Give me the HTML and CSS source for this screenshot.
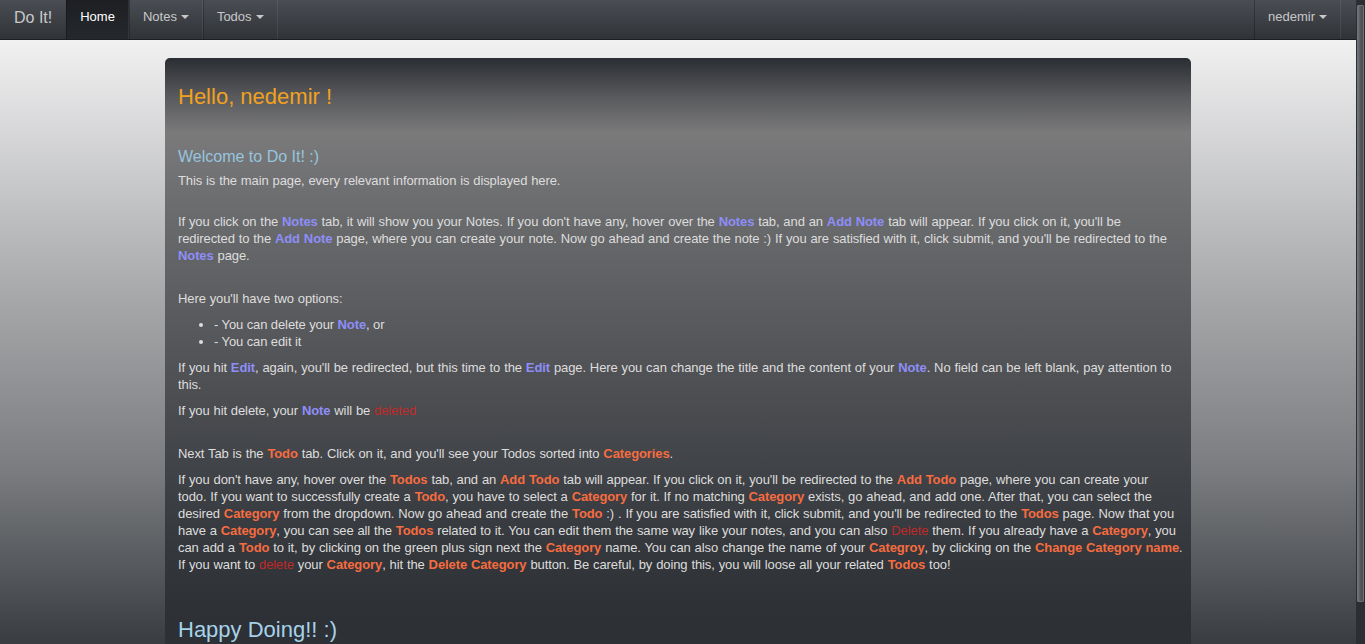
FILE: index.html
```html
<!DOCTYPE html>
<html lang="en">
<head>
<meta charset="utf-8">
<title>Do It!</title>
<link rel="stylesheet" href="styles.css">
</head>
<body>
<div class="app">
  <div class="page">
    <nav class="navbar">
      <a class="brand" href="#">Do It!</a>
      <ul class="nav">
        <li class="active"><a href="#">Home</a></li>
        <li><a href="#">Notes <span class="caret"></span></a></li>
        <li><a href="#">Todos <span class="caret"></span></a></li>
      </ul>
      <ul class="nav nav-right">
        <li><a href="#">nedemir <span class="caret"></span></a></li>
      </ul>
    </nav>
    <main class="panel">
      <h2 class="hello">Hello, nedemir !</h2>
      <h4 class="welcome">Welcome to Do It! :)</h4>
      <p>This is the main page, every relevant information is displayed here.</p>
      <p class="gap-md">If you click on the <b class="n">Notes</b> tab, it will show you your Notes. If you don't have any, hover over the <b class="n">Notes</b> tab, and an <b class="n">Add Note</b> tab will appear. If you click on it, you'll be<br>redirected to the <b class="n">Add Note</b> page, where you can create your note. Now go ahead and create the note :) If you are satisfied with it, click submit, and you'll be redirected to the<br><b class="n">Notes</b> page.</p>
      <p class="gap-lg">Here you'll have two options:</p>
      <ul class="options">
        <li>- You can delete your <b class="n">Note</b>, or</li>
        <li>- You can edit it</li>
      </ul>
      <p>If you hit <b class="n">Edit</b>, again, you'll be redirected, but this time to the <b class="n">Edit</b> page. Here you can change the title and the content of your <b class="n">Note</b>. No field can be left blank, pay attention to<br>this.</p>
      <p>If you hit delete, your <b class="n">Note</b> will be <span class="del">deleted</span></p>
      <p class="gap-lg">Next Tab is the <b class="t">Todo</b> tab. Click on it, and you'll see your Todos sorted into <b class="t">Categories</b>.</p>
      <p>If you don't have any, hover over the <b class="t">Todos</b> tab, and an <b class="t">Add Todo</b> tab will appear. If you click on it, you'll be redirected to the <b class="t">Add Todo</b> page, where you can create your<br>todo. If you want to successfully create a <b class="t">Todo</b>, you have to select a <b class="t">Category</b> for it. If no matching <b class="t">Category</b> exists, go ahead, and add one. After that, you can select the<br>desired <b class="t">Category</b> from the dropdown. Now go ahead and create the <b class="t">Todo</b> :) . If you are satisfied with it, click submit, and you'll be redirected to the <b class="t">Todos</b> page. Now that you<br>have a <b class="t">Category</b>, you can see all the <b class="t">Todos</b> related to it. You can edit them the same way like your notes, and you can also <span class="del">Delete</span> them. If you already have a <b class="t">Category</b>, you<br>can add a <b class="t">Todo</b> to it, by clicking on the green plus sign next the <b class="t">Category</b> name. You can also change the name of your <b class="t">Categroy</b>, by clicking on the <b class="t">Change Category name</b>.<br>If you want to <span class="del">delete</span> your <b class="t">Category</b>, hit the <b class="t">Delete Category</b> button. Be careful, by doing this, you will loose all your related <b class="t">Todos</b> too!</p>
      <h2 class="closing">Happy Doing!! :)</h2>
    </main>
  </div>
  <div class="scrollbar"><div class="thumb"></div></div>
</div>
</body>
</html>
```

FILE: styles.css
```css
html, body {
  margin: 0;
  height: 100%;
  overflow: hidden;
}
body {
  font-family: "Liberation Sans", Arial, sans-serif;
  font-size: 13px;
  line-height: 17px;
  color: #dddddd;
}
.app {
  display: flex;
  height: 100vh;
}
.page {
  flex: 1;
  min-width: 0;
  overflow: hidden;
  background: linear-gradient(to bottom, #f1f1f2 40px, #a6a7a9 300px, #7a7c7f 470px, #393c41 644px);
}
.scrollbar {
  width: 9px;
  background: #2b2e32;
  padding-top: 5px;
  box-sizing: border-box;
}
.thumb {
  height: 597px;
  margin-left: 1px;
  width: 7px;
  box-sizing: border-box;
  border: 1px solid #6f7276;
  border-radius: 1px;
  background: linear-gradient(to right, #74777b, #56595d 40%, #4a4d51);
}

/* navbar */
.navbar {
  display: flex;
  align-items: stretch;
  height: 40px;
  box-sizing: border-box;
  padding-right: 15px;
  background: linear-gradient(to bottom, #4a4e54, #3a3e43 60%, #303338);
  border-bottom: 1px solid #1c1e22;
}
.brand {
  display: flex;
  align-items: center;
  padding: 0 14px 5px 14px;
  white-space: nowrap;
  font-size: 16px;
  color: #c8c8c8;
  text-decoration: none;
}
.nav {
  display: flex;
  margin: 0;
  padding: 0;
  list-style: none;
}
.nav-right {
  margin-left: auto;
}
.nav li {
  display: flex;
}
.nav a {
  display: flex;
  align-items: center;
  gap: 4px;
  padding: 0 13px 6px;
  white-space: nowrap;
  font-size: 13px;
  color: #c8c8c8;
  text-decoration: none;
  border-left: 1px solid rgba(0, 0, 0, 0.25);
  border-right: 1px solid rgba(255, 255, 255, 0.07);
}
.nav .active a {
  color: #ffffff;
  background: linear-gradient(to bottom, #1d1f23, #25282c);
}
.caret {
  display: inline-block;
  width: 0;
  height: 0;
  border-top: 4px solid #c8c8c8;
  border-left: 4px solid transparent;
  border-right: 4px solid transparent;
  margin-top: 1px;
}

/* panel */
.panel {
  display: block;
  width: 1026px;
  box-sizing: border-box;
  margin: 18px auto 0;
  padding: 26px 13px 60px;
  border-radius: 5px 5px 0 0;
  background: linear-gradient(to bottom, #2a2d32 0px, #5a5b5e 40px, #7a7a7b 75px, #6b6c6e 150px, #5b5c5f 250px, #4a4c50 350px, #3d4044 430px, #33363a 500px, #2d3035 560px);
}
.hello {
  margin: 0;
  font-size: 22px;
  line-height: 26px;
  font-weight: normal;
  color: #f2a11e;
}
.welcome {
  margin: 37px 0 5px;
  font-size: 16px;
  line-height: 20px;
  font-weight: normal;
  color: #96c4de;
}
.panel p {
  margin: 0 0 9px;
  letter-spacing: -0.1px;
  word-spacing: 0.4px;
  white-space: nowrap;
}
.panel .gap-md {
  margin-top: 24px;
}
.panel .gap-lg {
  margin-top: 26px;
}
.options {
  margin: 0 0 9px;
  padding-left: 36px;
  letter-spacing: -0.1px;
}
.n {
  color: #8e8ef8;
}
.t {
  color: #f66c40;
}
.del {
  color: #c02a2a;
}
.closing {
  margin: 44px 0 0;
  font-size: 22px;
  line-height: 26px;
  font-weight: normal;
  color: #a6d2ea;
}
```
